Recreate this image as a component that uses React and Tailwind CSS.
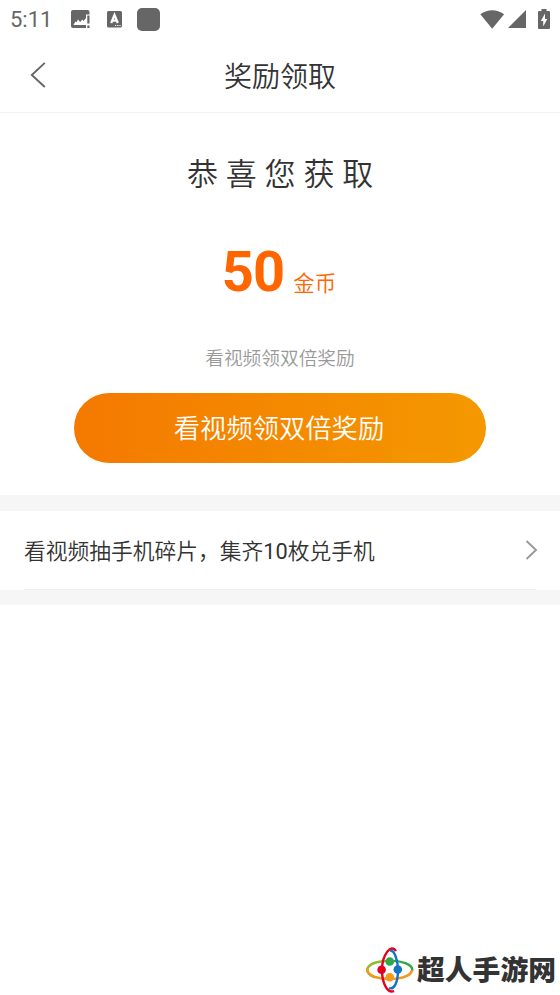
function StatusBar() {
  return (
    <div className="flex h-[38px] items-center justify-between pl-[10px] pr-[10px] text-[#666666]">
      <div className="flex items-center">
        <span className="w-[61px] pt-[2px] text-[22px] leading-[36px]">5:11</span>
        <svg className="h-[18px] w-[19px]" viewBox="0 0 19 18">
          <path
            fill="currentColor"
            fillRule="evenodd"
            d="M2 0h14.500a2 2 0 0 1 2 2v2.500H15V18H2a2 2 0 0 1-2-2V2a2 2 0 0 1 2-2zM2.500 15h12.500V8l-2.500 3-1.300-1.500-2 2.500L7 9.500l-1.600 2.800-1-.900z"
          />
          <path fill="currentColor" d="M16.300 5.500h2.200v8h-2.200zM16.300 15.500h2.200V18h-2.200z" />
        </svg>
        <svg className="ml-[17px] h-[17px] w-[15px]" viewBox="0 0 15 17">
          <rect width="15" height="16.500" rx="1.500" fill="currentColor" />
          <path
            fill="none"
            stroke="#fff"
            strokeWidth="2.200"
            d="M4.200 12L7.500 4l3.300 8M5.200 9.600h4.600"
          />
          <path stroke="#fff" strokeWidth="1" strokeDasharray="1.200 1" d="M8 14.500h6" />
        </svg>
        <span className="ml-[15px] h-[23px] w-[23px] rounded-[5px] bg-[#666666]" />
      </div>
      <div className="flex items-center">
        <svg className="h-[19px] w-[25px]" viewBox="0 0 25 19">
          <path fill="currentColor" d="M.3 4.300Q12.200-4 24.100 4.300L12.200 18.700z" />
        </svg>
        <svg className="ml-[3px] h-[18px] w-[18px]" viewBox="0 0 18 18">
          <path fill="currentColor" d="M18 0v18H0z" />
        </svg>
        <svg className="ml-[12px] mb-px h-[20px] w-[12px]" viewBox="0 0 12 20">
          <path
            fill="currentColor"
            d="M3.500 0h5v2H11a1 1 0 0 1 1 1v16a1 1 0 0 1-1 1H1a1 1 0 0 1-1-1V3a1 1 0 0 1 1-1h2.500z"
          />
          <path fill="#fff" d="M7 4.500L2.800 12h2.400v5.500L9.300 10H7z" />
        </svg>
      </div>
    </div>
  );
}

function Header() {
  return (
    <header className="grid h-[75px] grid-cols-[70px_1fr_70px] items-center border-b border-[#f2f2f2]">
      <svg className="ml-[30px] h-[26px] w-[16px]" viewBox="0 0 16 26" fill="none">
        <path d="M14.800 .9L1.800 13l13 12" stroke="#666" strokeWidth="1.900" />
      </svg>
      <h1 className="pt-[5px] text-center text-[28px] leading-[40px] font-[350]">奖励领取</h1>
    </header>
  );
}

function Reward() {
  return (
    <section className="flex h-[382px] flex-col items-center">
      <h2 className="mt-[42px] pl-[8px] text-[31px] leading-[40px] font-[350] tracking-[7.800px]">恭喜您获取</h2>
      <div className="mt-[35px] flex h-[84px] items-baseline pr-[2px] text-[#ff6600]">
        <span className="text-[56px] leading-[84px] font-bold tracking-[-1px]">50</span>
        <span className="ml-[9px] text-[21.500px] leading-[30px] font-[350]">金币</span>
      </div>
      <p className="mt-[30px] text-[18.700px] leading-[30px] font-[350] text-[#999999]">看视频领双倍奖励</p>
      <button className="mt-[19px] h-[70px] w-[412px] rounded-full bg-linear-to-r from-[#f47900] to-[#f49800] pt-[2px] pr-[2px] text-[26.300px] leading-[68px] font-[350] text-white">
        看视频领双倍奖励
      </button>
    </section>
  );
}

function PrizeRow() {
  return (
    <div className="border-t-[16px] border-b-[15px] border-[#f6f6f6]">
      <div className="mx-[24px] flex h-[79px] items-center justify-between border-b border-[#eeeeee]">
        <span className="pt-[3px] text-[21.750px] leading-[40px] font-[350]">
          看视频抽手机碎片，集齐<span className="font-normal">10</span>枚兑手机
        </span>
        <svg className="mr-[-2px] h-[20px] w-[13px]" viewBox="0 0 13 20" fill="none">
          <path d="M1.500 1L11 10l-9.500 9" stroke="#999" strokeWidth="1.900" />
        </svg>
      </div>
    </div>
  );
}

function SiteMark() {
  return (
    <footer className="mt-auto mb-[1px] flex items-center justify-end pr-[4px]">
      <svg className="h-[48px] w-[48px]" viewBox="0 0 48 48" fill="none" strokeWidth="2.400">
        <path d="M9 31.500C-5 26 0 15 23 15" stroke="#8dbb2c" />
        <path d="M22 15C36 14 48 19 46 25" stroke="#2fa84a" />
        <path d="M46 24C45 33 22 35 9 31C4 29 1 27 1.500 22" stroke="#f39a1e" />
        <path d="M30 5C25-3 16 9 16 24C16 38 22 48 28 45" stroke="#e60020" />
        <path d="M24 5C28 3 32 14 32 24C32 37 28 44 23 42" stroke="#1673c4" />
        <circle cx="23.800" cy="15.500" r="4.300" fill="#2fa84a" />
        <circle cx="15.600" cy="23.700" r="4.300" fill="#e60020" />
        <circle cx="31.800" cy="23.500" r="4.300" fill="#1673c4" />
        <circle cx="23.800" cy="31.300" r="4.300" fill="#f39a1e" />
      </svg>
      <span className="ml-[3px] pt-[2px] text-[27.800px] leading-[46px] font-black">超人手游网</span>
    </footer>
  );
}

export default function App() {
  return (
    <div className="flex h-[995px] w-[560px] flex-col overflow-hidden bg-white font-['Roboto','Noto_Sans_CJK_SC',sans-serif] text-[#333333]">
      <StatusBar />
      <Header />
      <Reward />
      <PrizeRow />
      <SiteMark />
    </div>
  );
}
